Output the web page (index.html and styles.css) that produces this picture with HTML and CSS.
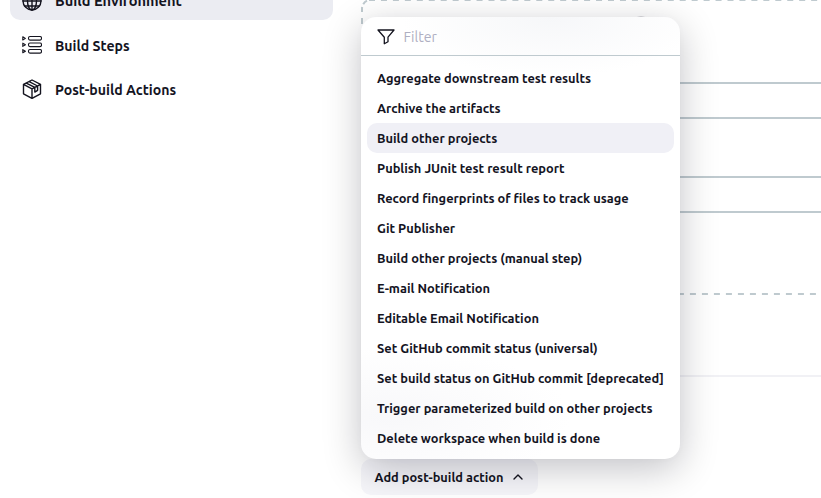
FILE: index.html
```html
<!DOCTYPE html>
<html lang="en">
<head>
<meta charset="utf-8">
<title>Build configuration</title>
<link rel="stylesheet" href="styles.css">
</head>
<body>
<div class="page">
  <nav class="side">
    <a class="task active">
      <svg viewBox="0 0 20 20"><circle cx="10" cy="10" r="9"/><ellipse cx="10" cy="10" rx="4.5" ry="9"/><path d="M10 1v18M1 10h18M2.5 5h15M2.5 15h15"/></svg>
      <span>Build Environment</span>
    </a>
    <a class="task">
      <svg class="thin" viewBox="0 0 20 20"><rect x="6.5" y="1.5" width="13" height="3.6" rx="1.5"/><rect x="6.5" y="8" width="13" height="3.6" rx="1.5"/><rect x="6.5" y="14.5" width="13" height="3.6" rx="1.5"/><path d="M.8 1.8v3.2l2.6-1.6zM.8 8.2v3.2L3.4 9.8zM.8 14.6v3.2l2.6-1.6z"/></svg>
      <span>Build Steps</span>
    </a>
    <a class="task">
      <svg viewBox="0 0 20 20"><path d="M10 1l8.5 4.4v9.4L10 19.4l-8.5-4.6V5.4zM1.5 5.4L10 9.8l8.5-4.4M10 9.8v9.6M4.3 4.1l8.5 4.3v4.7l2.8-1.8V7L7.2 2.6"/></svg>
      <span>Post-build Actions</span>
    </a>
  </nav>
  <main class="main">
    <section class="chunk">
      <svg class="outline" viewBox="0 0 460 296"><path class="corner" d="M1 25V10A9 9 0 0 1 8 1"/><path d="M8 1H460" stroke-dasharray="6 5.95"/><path d="M1 36V285A9 9 0 0 0 10 295H460" stroke-dasharray="6 6" stroke-dashoffset="5"/></svg>
      <i class="help"></i>
      <div class="input"></div>
      <div class="input"></div>
    </section>
    <div class="rule"></div>
    <div class="anchor">
      <button class="add">Add post-build action
        <svg viewBox="0 0 10 6"><path d="M1 5l4-4 4 4"/></svg>
      </button>
      <div class="menu">
        <div class="filter">
          <svg viewBox="0 0 18 16"><path d="M1 1h16l-6 7.2v4.6L7.3 14.8V8.2z"/></svg>
          <span>Filter</span>
        </div>
        <ul class="items">
          <li>Aggregate downstream test results</li>
          <li>Archive the artifacts</li>
          <li class="hover">Build other projects</li>
          <li>Publish JUnit test result report</li>
          <li>Record fingerprints of files to track usage</li>
          <li>Git Publisher</li>
          <li>Build other projects (manual step)</li>
          <li>E-mail Notification</li>
          <li>Editable Email Notification</li>
          <li>Set GitHub commit status (universal)</li>
          <li>Set build status on GitHub commit [deprecated]</li>
          <li>Trigger parameterized build on other projects</li>
          <li>Delete workspace when build is done</li>
        </ul>
      </div>
    </div>
  </main>
</div>
</body>
</html>
```
FILE: styles.css
```css
* { box-sizing: border-box; }
body {
  margin: 0;
  height: 498px;
  overflow: hidden;
  background: #fff;
  color: #14141f;
  font-family: Ubuntu, "Noto Sans", sans-serif;
  font-weight: 600;
}
svg { fill: none; stroke: currentColor; stroke-linejoin: round; stroke-linecap: round; flex: none; }
.page { display: grid; grid-template-columns: 323px minmax(0, 1fr); column-gap: 28px; padding-left: 10px; }
.side { display: flex; flex-direction: column; gap: 6px; margin-top: -18px; }
.task {
  display: flex;
  align-items: center;
  gap: 13px;
  height: 38px;
  padding-left: 12px;
  border-radius: 10px;
  font-size: 14.1px;
  white-space: nowrap;
}
.task svg { width: 20px; height: 20px; stroke-width: 1.4; }
.task + .task span { padding-top: 1px; }
.task .thin { stroke-width: 1.1; }
.active { background: #ebecf2; font-weight: 700; font-size: 14.6px; }
.active span { padding-bottom: 2px; }
.main { margin-top: -1px; }
.chunk { position: relative; height: 296px; padding: 83px 0 0 22px; }
.outline {
  position: absolute;
  inset: 0;
  width: 460px;
  height: 296px;
  stroke: #bfcacf;
  stroke-width: 2;
  stroke-linecap: butt;
}
.corner { stroke-dasharray: 6 6 5 3 5 20; }
.help {
  position: absolute;
  left: 271px;
  top: 17px;
  width: 18px;
  height: 18px;
  border-radius: 50%;
  background: #d8d8dc;
}
.input {
  height: 37px;
  margin-bottom: 57px;
  border: 2px solid #bfcacf;
  border-right: 0;
  border-radius: 6px 0 0 6px;
}
.rule { height: 2px; margin: 80px 0 82px; background: #f1f1f5; }
.anchor { position: relative; width: 319px; }
.add {
  display: flex;
  align-items: center;
  justify-content: space-between;
  width: 177px;
  height: 36px;
  padding: 0 15px 0 13.5px;
  border: 0;
  border-radius: 10px;
  background: #f6f6fa;
  color: inherit;
  font: inherit;
  font-size: 12.8px;
  white-space: nowrap;
}
.add svg { width: 10px; height: 6px; stroke-width: 1.4; }
.menu {
  position: absolute;
  left: 0;
  bottom: 36px;
  width: 319px;
  height: 442px;
  overflow: hidden;
  border-radius: 15px;
  background:
    radial-gradient(ellipse 150px 60px at 190px 0, #f6f7f9, transparent),
    radial-gradient(ellipse 180px 70px at 30px 400px, #f8f8fa, transparent),
    #fff;
  box-shadow: 0 10px 38px rgba(0, 0, 20, 0.24), 0 0 8px rgba(0, 0, 20, 0.02);
}
.filter {
  display: flex;
  align-items: center;
  gap: 8.5px;
  height: 39px;
  padding: 2px 0 0 16px;
  border-bottom: 1px solid #bfcacf;
  color: #afafc2;
  font-size: 14.2px;
  font-weight: 400;
}
.filter svg { width: 18px; height: 16px; color: #14141f; stroke-width: 1.3; }
.items { list-style: none; margin: 0; padding: 7px 6px 6px; font-size: 12.85px; }
.items li {
  height: 30px;
  padding-left: 10px;
  border-radius: 10px;
  line-height: 30px;
  white-space: nowrap;
}
.items .hover { background: #f0f0f6; }
```
